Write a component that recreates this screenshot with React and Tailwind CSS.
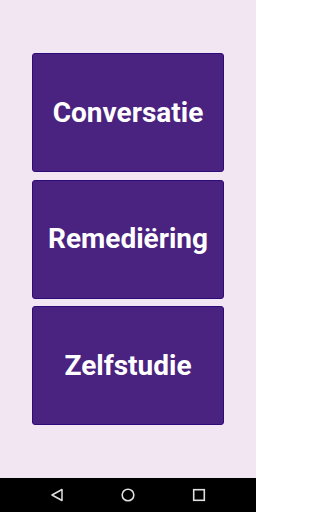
import React from "react";

const items = ["Conversatie", "Remediëring", "Zelfstudie"];

export default function App() {
  return (
    <div className="w-[256px] h-[512px] flex flex-col bg-[#f2e6f2]" style={{ fontFamily: "Roboto, 'Liberation Sans', sans-serif" }}>
      <div className="flex-1 flex flex-col items-center pt-[53px] gap-[7.5px]">
        {items.map((t) => (
          <button
            key={t}
            className="w-[192px] h-[119px] rounded-[3px] border border-[#2e0b7a] bg-[#4a2380] text-white font-bold text-[28px] leading-none flex items-center justify-center"
          >
            {t}
          </button>
        ))}
      </div>
      <div className="h-[34px] bg-black flex items-center justify-between px-[49px]">
        <svg width="16" height="16" viewBox="0 0 16 16" fill="none" stroke="#e0e0e0" strokeWidth="1.5">
          <path d="M13 2.5 L3 8 L13 13.5 Z" strokeLinejoin="round" />
        </svg>
        <svg width="16" height="16" viewBox="0 0 16 16" fill="none" stroke="#e0e0e0" strokeWidth="1.6">
          <circle cx="8" cy="8" r="5.8" />
        </svg>
        <svg width="16" height="16" viewBox="0 0 16 16" fill="none" stroke="#e0e0e0" strokeWidth="1.6">
          <rect x="2.7" y="2.7" width="10.6" height="10.6" />
        </svg>
      </div>
    </div>
  );
}
